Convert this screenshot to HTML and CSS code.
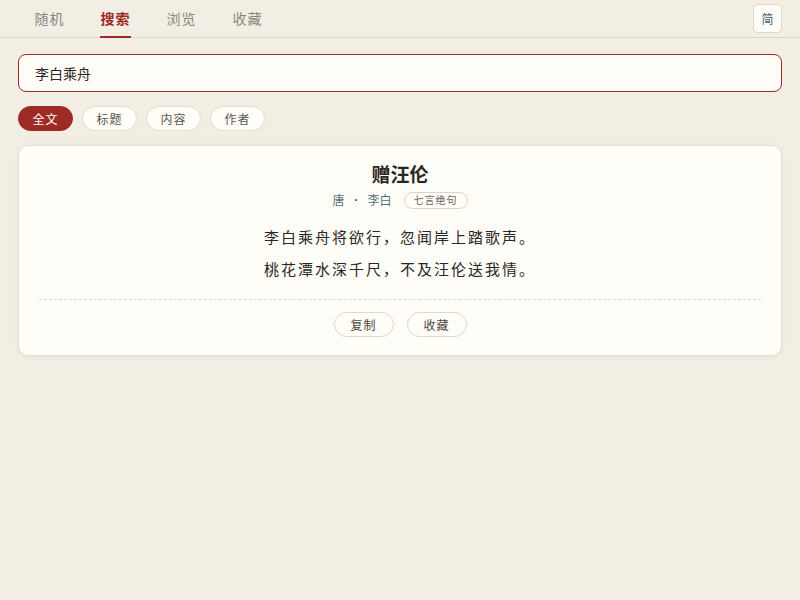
FILE: index.html
```html
<!doctype html>
<html>

<head>
    <meta charset="utf-8">
    <link rel="stylesheet" href="styles.css">
</head>

<body>
    <nav class="topbar">
        <div class="tabs">
            <a class="tab">随机</a>
            <a class="tab active">搜索</a>
            <a class="tab">浏览</a>
            <a class="tab">收藏</a>
        </div>
        <button class="lang">简</button>
    </nav>

    <main class="page">
        <input class="search" type="text" value="李白乘舟">

        <div class="filters">
            <button class="chip active">全文</button>
            <button class="chip">标题</button>
            <button class="chip">内容</button>
            <button class="chip">作者</button>
        </div>

        <article class="poem">
            <h2 class="poem-title">赠汪伦</h2>
            <div class="poem-meta">
                <span>唐</span>
                <span class="dot">•</span>
                <span>李白</span>
                <span class="form">七言绝句</span>
            </div>
            <div class="poem-body">
                <p>李白乘舟将欲行，忽闻岸上踏歌声。</p>
                <p>桃花潭水深千尺，不及汪伦送我情。</p>
            </div>
            <div class="poem-actions">
                <button class="action">复制</button>
                <button class="action">收藏</button>
            </div>
        </article>
    </main>
</body>

</html>
```

FILE: styles.css
```css
html,
body {
    margin: 0;
    height: 100%;
    background-color: #f3eee4;
    font-family: "Liberation Serif", "Noto Sans CJK SC", serif;
    color: #2b2623;
}

button,
input {
    font-family: inherit;
}

.topbar {
    display: flex;
    justify-content: space-between;
    align-items: center;
    height: 37px;
    padding: 0 18px 0 34px;
    border-bottom: 1px solid #ddd5c6;
}

.tabs {
    display: flex;
    gap: 35px;
    align-self: stretch;
}

.tab {
    display: flex;
    justify-content: center;
    align-items: center;
    width: 31px;
    font-size: 14px;
    color: #8a8580;
    letter-spacing: 1px;
    border-bottom: 2px solid transparent;
    margin-bottom: -1px;
}

.tab.active {
    color: #9e2a26;
    font-weight: bold;
    border-bottom-color: #9e2a26;
}

.lang {
    width: 29px;
    height: 29px;
    padding: 0;
    border: 1px solid #e0d9cb;
    border-radius: 5px;
    background-color: #fffdf8;
    font-size: 12px;
    color: #3d5a6a;
}

.page {
    padding: 16px 18px;
}

.search {
    display: block;
    box-sizing: border-box;
    width: 100%;
    height: 38px;
    padding: 0 16px;
    border: 1px solid #9e2a26;
    border-radius: 8px;
    background-color: #fffdf8;
    font-size: 14px;
    color: #2b2623;
    outline: none;
}

.filters {
    display: flex;
    gap: 9px;
    margin: 14px 0 14px;
}

.chip {
    width: 55px;
    height: 25px;
    padding: 0;
    border: 1px solid #e4dccd;
    border-radius: 13px;
    background-color: #fffdf8;
    font-size: 12px;
    color: #5b5550;
    letter-spacing: 1px;
}

.chip.active {
    background-color: #9e2a26;
    border-color: #9e2a26;
    color: #ffffff;
}

.poem {
    padding: 16px 20px 18px;
    border: 1px solid #e6dfd1;
    border-radius: 10px;
    background-color: #fffdf8;
    box-shadow: 0 1px 4px rgba(90, 70, 40, 0.08);
    text-align: center;
}

.poem-title {
    margin: 0;
    font-size: 19px;
    line-height: 28px;
    font-weight: bold;
    color: #2b2623;
}

.poem-meta {
    display: flex;
    justify-content: center;
    align-items: center;
    gap: 10px;
    margin-top: 1px;
    font-size: 12px;
    color: #4f7478;
}

.poem-meta .dot {
    font-size: 9px;
    color: #555;
}

.poem-meta .form {
    margin-left: 2px;
    padding: 0 9px;
    border: 1px solid #ddd3c2;
    border-radius: 9px;
    font-size: 10px;
    line-height: 15px;
    color: #6a625b;
    letter-spacing: 1px;
}

.poem-body {
    margin: 13px 0 12px;
    padding-bottom: 13px;
    border-bottom: 1px dashed #e0d9cb;
}

.poem-body p {
    margin: 0;
    font-size: 15px;
    line-height: 32px;
    letter-spacing: 2px;
    color: #2b2623;
}

.poem-actions {
    display: flex;
    justify-content: center;
    gap: 13px;
}

.action {
    width: 60px;
    height: 25px;
    padding: 0;
    border: 1px solid #e0d8c9;
    border-radius: 13px;
    background-color: #fffdf8;
    font-size: 12px;
    color: #4a4540;
    letter-spacing: 1px;
}
```
